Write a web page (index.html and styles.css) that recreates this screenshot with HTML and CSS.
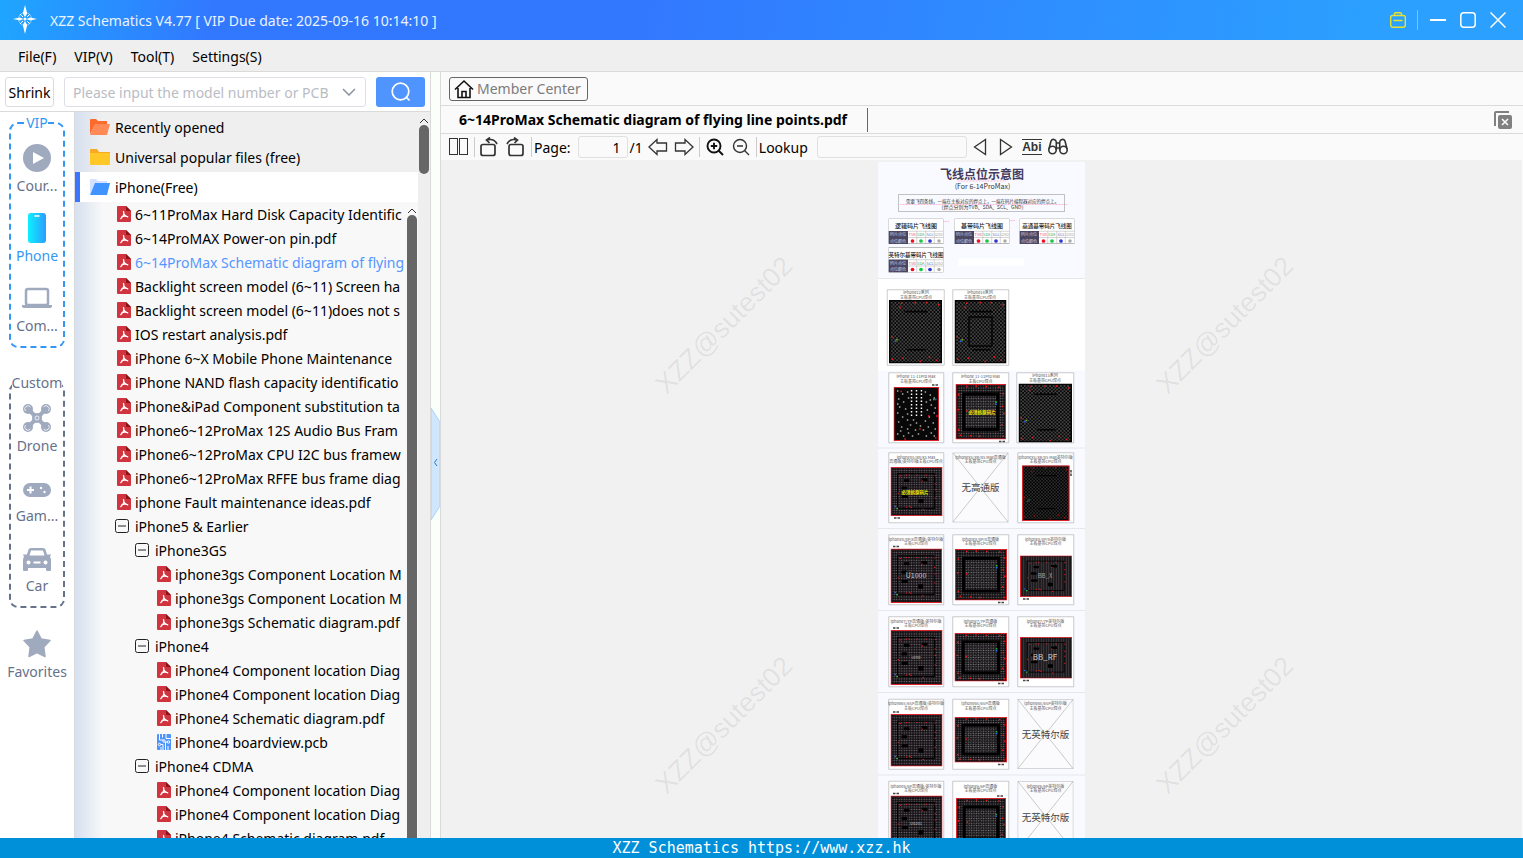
FILE: index.html
```html
<!DOCTYPE html>
<html lang="en">
<head>
  <meta charset="UTF-8">
  <meta name="viewport" content="width=device-width, initial-scale=1.0">
  <title>XZZ Schematics</title>
  <link rel="stylesheet" href="styles.css">
</head>
<body>
  <!-- Shared icons -->
  <svg class="sprite" aria-hidden="true">
    <symbol id="i-pdf" viewBox="0 0 20 16">
      <path d="M3 0h8l5 5v10q0 1-1 1H3q-1 0-1-1V1q0-1 1-1z" fill="#d0353f"/>
      <path d="M11 0l5 5h-4q-1 0-1-1z" fill="#8e1119"/>
      <path d="M8.500 5.500c1 2-.5 5-2.800 7.200M8.500 5.500c0 3 2 4.800 4.300 5.300M6.700 10.800c1.500-.6 3.500-.8 5-.4" fill="none" stroke="#fff" stroke-width="1.200" stroke-linecap="round"/>
    </symbol>
    <symbol id="i-pcb" viewBox="0 0 20 16">
      <rect x="2" width="14" height="16" rx="1" fill="#4f94fb"/>
      <path d="M4.500 0v6h4M7.500 0v3.500M4 10.500h4V16M6 13v3M10.500 16v-8h3M13 16v-4M11 0v4.500h5" fill="none" stroke="#fff"/>
      <circle cx="9" cy="7" r="1.200" fill="#4f94fb" stroke="#fff"/><circle cx="13.500" cy="8" r="1.200" fill="#4f94fb" stroke="#fff"/><circle cx="4.500" cy="10.500" r="1.200" fill="#4f94fb" stroke="#fff"/>
    </symbol>
    <symbol id="i-minus" viewBox="0 0 20 16">
      <rect x=".5" y="1.500" width="13" height="13" rx="2" fill="none" stroke="#222"/>
      <path d="M3 8h8" stroke="#222"/>
    </symbol>
    <symbol id="i-up" viewBox="0 0 10 6"><path d="M1 5l4-4 4 4" fill="none" stroke="#333"/></symbol>
  </svg>

  <header class="titlebar">
    <svg class="logo" width="24" height="30" viewBox="0 0 24 30">
      <circle cx="12" cy="14" r="6.500" fill="none" stroke="#8fd0ff" stroke-width="1"/>
      <path d="M12 0l2.200 8.500L12 12l-2.200-3.500zM12 29l2.200-9L12 16l-2.200 4zM0 14l7-1.600 3.500 1.600L7 15.600zM24 14l-7-1.600-3.500 1.600 3.500 1.600z" fill="#fff"/>
      <path d="M7 9l3 3M17 9l-3 3M7 19l3-3M17 19l-3-3" stroke="#fff"/>
      <circle cx="12" cy="14" r="1.500" fill="#fff"/>
    </svg>
    <h1>XZZ Schematics V4.77 [ VIP Due date: 2025-09-16 10:14:10 ]</h1>
    <button class="win-btn" aria-label="Toolbox"><svg width="16" height="16" viewBox="0 0 16 16" fill="none" stroke="#e6e32f" stroke-width="1.400"><rect x=".7" y="3.500" width="14.600" height="11.800" rx="2"/><path d="M4.500 3.500V2q0-1.300 1.300-1.300h4.400q1.300 0 1.300 1.300v1.500M3.500 8.500h9"/></svg></button>
    <span class="win-sep"></span>
    <button class="win-btn" aria-label="Minimize"><svg width="16" height="16" viewBox="0 0 16 16"><path d="M0 8h16" stroke="#fff" stroke-width="2"/></svg></button>
    <button class="win-btn" aria-label="Maximize"><svg width="16" height="16" viewBox="0 0 16 16"><rect x=".8" y=".8" width="14.400" height="14.400" rx="3" fill="none" stroke="#fff" stroke-width="1.500"/></svg></button>
    <button class="win-btn" aria-label="Close"><svg width="16" height="16" viewBox="0 0 16 16"><path d="M.5.5l15 15M15.500.5l-15 15" stroke="#fff" stroke-width="1.500"/></svg></button>
  </header>

  <nav class="menubar">
    <button>File(F)</button>
    <button>VIP(V)</button>
    <button>Tool(T)</button>
    <button>Settings(S)</button>
  </nav>

  <div class="main">
    <aside class="side">
      <form class="search">
        <button type="button" class="shrink">Shrink</button>
        <div class="search-field">
          <input type="text" aria-label="Model number" placeholder="Please input the model number or PCB">
          <button type="button" aria-label="History"><svg width="14" height="8" viewBox="0 0 14 8"><path d="M1 1l6 6 6-6" fill="none" stroke="#8b93a0" stroke-width="1.500"/></svg></button>
        </div>
        <button type="button" class="search-btn" aria-label="Search"><svg width="20" height="20" viewBox="0 0 20 20" fill="none" stroke="#fff" stroke-width="1.700"><circle cx="9.500" cy="9.500" r="8.300"/><path d="M15.500 15.500l3 3"/></svg></button>
      </form>

      <div class="side-body">
        <div class="cats">
          <fieldset class="cat-group vip">
            <legend>VIP</legend>
            <button><svg width="30" height="30" viewBox="0 0 30 30"><circle cx="15" cy="15" r="14" fill="#a0aabf"/><path d="M11 9v12l11-6z" fill="#fff"/></svg>Cour...</button>
            <button class="active"><svg width="30" height="30" viewBox="0 0 30 30"><defs><linearGradient id="ph"><stop offset="0" stop-color="#0df0ff"/><stop offset="1" stop-color="#2c9dff"/></linearGradient></defs><rect x="6" width="18" height="30" rx="3" fill="url(#ph)"/><path d="M13 3h4" stroke="#fff" stroke-width="1.500" stroke-linecap="round"/></svg>Phone</button>
            <button><svg width="30" height="30" viewBox="0 0 30 30"><rect x="4" y="6" width="22" height="16" rx="2" fill="none" stroke="#a0aabf" stroke-width="2.500"/><path d="M0 22h30v1q0 2-3 2H3q-3 0-3-2z" fill="#a0aabf"/></svg>Com...</button>
          </fieldset>
          <fieldset class="cat-group custom">
            <legend>Custom</legend>
            <button><svg width="30" height="30" viewBox="0 0 30 30" fill="#a0aabf"><circle cx="6" cy="6" r="5"/><circle cx="24" cy="6" r="5"/><circle cx="6" cy="24" r="5"/><circle cx="24" cy="24" r="5"/><path d="M6 6l9 9M24 6l-9 9M6 24l9-9M24 24l-9-9" stroke="#a0aabf" stroke-width="4"/><circle cx="15" cy="15" r="5"/><g fill="none" stroke="#fff" stroke-width=".8"><circle cx="15" cy="15" r="2"/><path d="M3.500 8a3.200 3.200 0 1 1 5-4M26.500 8a3.200 3.200 0 1 0-5-4M3.500 22a3.200 3.200 0 1 0 5 4M26.500 22a3.200 3.200 0 1 1-5 4"/></g></svg>Drone</button>
            <button><svg width="30" height="30" viewBox="0 0 30 30"><rect x="1" y="10" width="28" height="14" rx="7" fill="#a0aabf"/><path d="M5 17h7M8.500 13.500v7" stroke="#fff" stroke-width="2"/><circle cx="19" cy="15" r="1.200" fill="#fff"/><circle cx="22.500" cy="19" r="1.200" fill="#fff"/></svg>Gam...</button>
            <button><svg width="30" height="30" viewBox="0 0 30 30"><path d="M1 11.500h4l1.500-5Q7.200 5 9 5h12q1.800 0 2.500 1.500l1.500 5h4l-1 2.500q1 1 1 3v10q0 1-1 1h-3q-1 0-1-1v-2H6v2q0 1-1 1H2q-1 0-1-1V17q0-2 1-3z" fill="#a0aabf"/><path d="M9 7.500h12l1.500 5h-15z" fill="#fff"/><circle cx="6.500" cy="19.500" r="2" fill="#fff"/><circle cx="23.500" cy="19.500" r="2" fill="#fff"/><path d="M11.500 19.500h7" stroke="#fff" stroke-width="2"/></svg>Car</button>
          </fieldset>
          <button class="favorites"><svg width="30" height="30" viewBox="0 0 30 30"><path d="M15 2l4.200 8 8.800 1.500-6.200 6.500 1.200 9.500-8-4-8 4 1.200-9.500L2 11.500 10.800 10z" fill="#a0aabf" stroke="#a0aabf" stroke-width="1.500" stroke-linejoin="round"/></svg>Favorites</button>
        </div>

        <div class="tree">
          <div class="tree-content">
            <button class="folder"><svg width="20" height="16" viewBox="0 0 20 16"><path d="M0 15V1q0-1 1-1h5l2 2h9v4H5z" fill="#fc6b2c"/><path d="M5 5h15l-3 11H0z" fill="#ff8a57"/></svg>Recently opened</button>
            <button class="folder"><svg width="20" height="16" viewBox="0 0 20 16"><path d="M0 6V1q0-1 1-1h6l2 3h11v3z" fill="#f9aa22"/><path d="M0 4h20v11q0 1-1 1H1q-1 0-1-1z" fill="#ffc727"/></svg>Universal popular files (free)</button>
            <button class="folder open"><svg width="20" height="16" viewBox="0 0 20 16"><path d="M0 15V1q0-1 1-1h5l2 2h9v4H5z" fill="#d5e1ff"/><path d="M5 4h15l-3 12H0z" fill="#3f94ff"/></svg>iPhone(Free)</button>
            <div class="files-wrap">
              <ul class="files">
                <li><svg><use href="#i-pdf"/></svg>6~11ProMax Hard Disk Capacity Identific</li>
                <li><svg><use href="#i-pdf"/></svg>6~14ProMAX Power-on pin.pdf</li>
                <li class="current"><svg><use href="#i-pdf"/></svg>6~14ProMax Schematic diagram of flying</li>
                <li><svg><use href="#i-pdf"/></svg>Backlight screen model (6~11) Screen ha</li>
                <li><svg><use href="#i-pdf"/></svg>Backlight screen model (6~11)does not s</li>
                <li><svg><use href="#i-pdf"/></svg>IOS restart analysis.pdf</li>
                <li><svg><use href="#i-pdf"/></svg>iPhone 6~X Mobile Phone Maintenance</li>
                <li><svg><use href="#i-pdf"/></svg>iPhone NAND flash capacity identificatio</li>
                <li><svg><use href="#i-pdf"/></svg>iPhone&amp;iPad Component substitution ta</li>
                <li><svg><use href="#i-pdf"/></svg>iPhone6~12ProMax 12S Audio Bus Fram</li>
                <li><svg><use href="#i-pdf"/></svg>iPhone6~12ProMax CPU I2C bus framew</li>
                <li><svg><use href="#i-pdf"/></svg>iPhone6~12ProMax RFFE bus frame diag</li>
                <li><svg><use href="#i-pdf"/></svg>iphone Fault maintenance ideas.pdf</li>
                <li><svg><use href="#i-minus"/></svg>iPhone5 &amp; Earlier</li>
                <li class="lv2"><svg><use href="#i-minus"/></svg>iPhone3GS</li>
                <li class="lv3"><svg><use href="#i-pdf"/></svg>iphone3gs Component Location M</li>
                <li class="lv3"><svg><use href="#i-pdf"/></svg>iphone3gs Component Location M</li>
                <li class="lv3"><svg><use href="#i-pdf"/></svg>iphone3gs Schematic diagram.pdf</li>
                <li class="lv2"><svg><use href="#i-minus"/></svg>iPhone4</li>
                <li class="lv3"><svg><use href="#i-pdf"/></svg>iPhone4 Component location Diag</li>
                <li class="lv3"><svg><use href="#i-pdf"/></svg>iPhone4 Component location Diag</li>
                <li class="lv3"><svg><use href="#i-pdf"/></svg>iPhone4 Schematic diagram.pdf</li>
                <li class="lv3"><svg><use href="#i-pcb"/></svg>iPhone4 boardview.pcb</li>
                <li class="lv2"><svg><use href="#i-minus"/></svg>iPhone4 CDMA</li>
                <li class="lv3"><svg><use href="#i-pdf"/></svg>iPhone4 Component location Diag</li>
                <li class="lv3"><svg><use href="#i-pdf"/></svg>iPhone4 Component location Diag</li>
                <li class="lv3"><svg><use href="#i-pdf"/></svg>iPhone4 Schematic diagram.pdf</li>
              </ul>
              <div class="scroll inner"><svg width="10" height="6"><use href="#i-up"/></svg><span class="thumb"></span></div>
            </div>
          </div>
          <div class="scroll outer"><svg width="10" height="6"><use href="#i-up"/></svg><span class="thumb"></span></div>
        </div>
      </div>
    </aside>

    <div class="splitter">
      <button aria-label="Collapse"><svg width="9" height="112" viewBox="0 0 9 112"><path d="M0 0l9 14v84L0 112z" fill="#cfe6fd" stroke="#a9d2fb"/><path d="M6 51L3.500 54.500 6 58" fill="none" stroke="#2b78c8"/></svg></button>
    </div>

    <section class="viewer">
      <div class="member-row">
        <button class="member"><svg width="20" height="20" viewBox="0 0 20 20" fill="none" stroke="#111" stroke-width="1.600"><path d="M1 10.500L10 2l9 8.500M4 9v9.500h12V9M8 18v-5.500h4V18"/></svg>Member Center</button>
      </div>
      <div class="tabs">
        <button class="tab">6~14ProMax Schematic diagram of flying line points.pdf</button>
        <button class="close-all" aria-label="Close all"><svg width="18" height="18" viewBox="0 0 18 18"><path d="M1 15V2q0-1 1-1h13" fill="none" stroke="#808080" stroke-width="2"/><rect x="4" y="4" width="14" height="14" rx="2" fill="#808080"/><path d="M8 8l6 6M14 8l-6 6" stroke="#fff" stroke-width="1.500"/></svg></button>
      </div>
      <div class="toolbar">
        <button aria-label="Two pages"><svg width="20" height="18" viewBox="0 0 20 18" fill="none" stroke="#333"><rect x=".5" y=".5" width="8" height="16"/><rect x="10.500" y=".5" width="8" height="16"/></svg></button>
        <span class="sep"></span>
        <button aria-label="Rotate left"><svg width="20" height="20" viewBox="0 0 20 20" fill="none" stroke="#333" stroke-width="1.700"><rect x="1" y="7.500" width="14" height="11" rx="2"/><path d="M7 3q7-2 10 4M10 .5L6.500 3l3 3"/></svg></button>
        <button aria-label="Rotate right"><svg width="20" height="20" viewBox="0 0 20 20" fill="none" stroke="#333" stroke-width="1.700"><rect x="3" y="7.500" width="14" height="11" rx="2"/><path d="M11 3Q4 1 1 7M8 .5L11.500 3l-3 3"/></svg></button>
        <span class="sep"></span>
        <label for="page">Page:</label>
        <input id="page" class="page-no" type="text" value="1">
        <span class="page-total">/1</span>
        <button aria-label="Previous page"><svg width="20" height="18" viewBox="0 0 20 18" fill="none" stroke="#333" stroke-width="1.300"><path d="M1 9l8-7.500V5h9.500v8H9v3.500z"/></svg></button>
        <button aria-label="Next page"><svg width="20" height="18" viewBox="0 0 20 18" fill="none" stroke="#333" stroke-width="1.300"><path d="M19 9l-8-7.500V5H1.500v8H11v3.500z"/></svg></button>
        <span class="sep"></span>
        <button aria-label="Zoom in"><svg width="18" height="18" viewBox="0 0 18 18" fill="none" stroke="#111" stroke-width="1.900"><circle cx="8" cy="8" r="6.500"/><path d="M12.500 12.500l4.500 4.500M8 4.800v6.400M4.800 8h6.400"/></svg></button>
        <button aria-label="Zoom out"><svg width="18" height="18" viewBox="0 0 18 18" fill="none" stroke="#333" stroke-width="1.400"><circle cx="8" cy="8" r="6.500"/><path d="M12.500 12.500l4.500 4.500M5 8h6"/></svg></button>
        <span class="sep"></span>
        <label for="lookup">Lookup</label>
        <input id="lookup" class="lookup" type="text">
        <button aria-label="Find previous"><svg width="14" height="18" viewBox="0 0 14 18" fill="none" stroke="#333" stroke-width="1.300"><path d="M12.500 1.500v15L1.500 9z"/></svg></button>
        <button aria-label="Find next"><svg width="14" height="18" viewBox="0 0 14 18" fill="none" stroke="#333" stroke-width="1.300"><path d="M1.500 1.500v15l11-7.500z"/></svg></button>
        <button><span class="abi">Abi</span></button>
        <button aria-label="Find"><svg width="20" height="18" viewBox="0 0 20 18" fill="none" stroke="#333" stroke-width="1.600"><circle cx="4.500" cy="12" r="3.700"/><circle cx="15.500" cy="12" r="3.700"/><path d="M1 11L3 3q1-2 3-1.500T8.300 4v8M19 11l-2-8q-1-2-3-1.500T11.700 4v8M8.300 5h3.400M8.300 10h3.400"/></svg></button>
      </div>

      <div class="canvas">
        <svg class="sheet" viewBox="0 0 414 1400">
          <defs>
            <pattern id="dots" width="7" height="7" patternUnits="userSpaceOnUse"><path d="M.8 1.800h2M4.300 5.300h2" stroke="#dedede" stroke-width="2"/></pattern>
            <pattern id="dense" width="5" height="5" patternUnits="userSpaceOnUse"><path d="M1.200 2.500h2.600" stroke="#787378" stroke-width="2.400"/></pattern>
            <symbol id="t-head" viewBox="0 0 110 51">
              <rect x=".5" y=".5" width="109" height="50" fill="#fff" stroke="#777"/>
              <rect y="25" width="39" height="26" fill="#4a4560"/>
              <path d="M39 25.500h71M39 38h71M56.500 25v26M74.500 25v26M91.500 25v26" stroke="#aaa" fill="none"/>
              <g font-size="8"><text x="3" y="35" fill="#d5d2e0">码片点位</text><text x="3" y="48" fill="#d5d2e0">点位颜色</text>
              <text x="40" y="35" fill="#e75a76">TVB</text><text x="57" y="35" fill="#4da862">SDA</text><text x="76" y="35" fill="#6267b5">SCL</text><text x="92" y="35" fill="#aaa">GND</text></g>
              <circle cx="48" cy="45" r="3.700" fill="#f01024"/><circle cx="65" cy="45" r="3.700" fill="#18c840"/><circle cx="83" cy="45" r="3.700" fill="#3038cf"/><circle cx="101" cy="45" r="3.500" fill="#aaa"/>
            </symbol>
            <!-- open ball grid -->
            <symbol id="chip-open" viewBox="0 0 104 120" preserveAspectRatio="none">
              <rect width="104" height="120" fill="#050505"/><rect x="3" y="3" width="98" height="114" fill="url(#dots)"/>
              <path d="M30 22h45M36 94h36" stroke="#050505" stroke-width="3"/>
              <path d="M23 6h3M50 5h3M72 5h3M96 9h3M20 14h3M4 70h3M5 112h3M78 108h3M60 116h3M92 114h3M26 110h3" stroke="#f01818" stroke-width="3"/>
              <path d="M11 78h3" stroke="#2868ff" stroke-width="3"/><path d="M14 75h3" stroke="#70b818" stroke-width="3"/>
            </symbol>
            <!-- ball grid with a black ring -->
            <symbol id="chip-ring" viewBox="0 0 104 104" preserveAspectRatio="none">
              <rect x="1" y="1" width="102" height="102" fill="#0b0a0b" stroke="#d8222c" stroke-width="2"/>
              <rect x="3" y="3" width="98" height="98" fill="url(#dense)"/>
              <rect x="17" y="19" width="70" height="66" fill="none" stroke="#000" stroke-width="6"/>
              <rect x="22" y="24" width="60" height="56" fill="url(#dots)" opacity=".35"/>
              <path d="M5 20h3M4 48h3M5 86h3M9 96h3M22 5h3M41 4h3M62 5h3M88 6h3M97 18h3M95 42h3M98 55h3M94 76h3M97 98h3M48 98h3M30 97h3M22 50h3" stroke="#f01818" stroke-width="3"/>
              <path d="M82 38h3" stroke="#2868ff" stroke-width="3"/><path d="M82 34h3" stroke="#18c840" stroke-width="3"/>
            </symbol>
            <!-- dense processor grid -->
            <symbol id="chip-cpu" viewBox="0 0 104 104" preserveAspectRatio="none">
              <rect x="1" y="1" width="102" height="102" fill="#0f0c0f" stroke="#d8222c" stroke-width="2"/>
              <rect x="3" y="3" width="98" height="98" fill="url(#dense)"/>
              <rect x="14" y="14" width="74" height="74" fill="none" stroke="#000" stroke-width="2"/>
              <path d="M27 26h11v6H27zM62 24h12v6H62zM22 42h11v6H22zM22 60h13v6H22zM56 68h10v9H56z" fill="#000"/>
              <path d="M18 19h3M30 17h3M36 17h3M52 17h3M70 17h3M88 18h3M88 36h3M88 48h3M88 66h3M31 85h3M37 84h3M40 86h3M14 56h3M62 30h3M64 90h3" stroke="#d81822" stroke-width="2"/>
              <path d="M8 84h3" stroke="#2868ff" stroke-width="3"/><path d="M12 88h3" stroke="#18c840" stroke-width="3"/>
            </symbol>
            <!-- flash with scattered pads -->
            <symbol id="chip-flash" viewBox="0 0 92 108" preserveAspectRatio="none">
              <rect x="1" y="1" width="90" height="106" fill="#080808" stroke="#d8222c" stroke-width="2"/>
              <path d="M7 8h3M17 14h3M27 10h3M9 24h3M19 30h3M11 40h3M23 44h3M7 52h3M17 60h3M27 66h3M9 70h3M15 80h3M27 84h3M7 94h3M19 98h3M33 76h3M29 92h3M63 10h3M73 16h3M81 22h3M65 30h3M75 36h3M67 46h3M81 52h3M71 60h3M63 68h3M79 72h3M69 80h3M59 86h3M75 92h3M65 98h3M81 98h3M45 72h3M53 78h3M43 86h3M49 94h3M29 22h3M7 34h3M27 54h3M13 88h3M37 98h3M39 66h3M83 84h3M73 26h3M83 42h3" stroke="#fff" stroke-width="2"/>
              <path d="M36.500 6v54M46.500 6v54M56.500 6v54" stroke="#fff" stroke-width="3" stroke-dasharray="3 4"/>
              <path d="M14 9h3M86 58h3M70 58h3M22 104h3M52 84h3M84 102h3" stroke="#f01818" stroke-width="3"/>
              <path d="M80 25h3" stroke="#18c840" stroke-width="3"/><path d="M84 25h3" stroke="#2868ff" stroke-width="3"/>
            </symbol>
            <symbol id="void" viewBox="0 0 112 140"><path d="M.5.500h111v139H.5zL111.500 139.500M111.500.5L.5 139.500" fill="#fbfbfd" stroke="#999"/></symbol>
          </defs>

          <rect width="414" height="1400" fill="#f9faff"/>
          <rect y="234" width="414" height="183" fill="#fff"/>
          <path d="M0 233h414M0 572h414M0 733h414M0 897h414M0 1061h414M0 1226h414" stroke="#c8c8cc" stroke-dasharray="3 1"/>

          <!-- heading -->
          <g text-anchor="middle" fill="#333">
            <text x="208" y="33" font-size="24" font-weight="700" fill="#443a5c">飞线点位示意图</text>
            <text x="209" y="54" font-size="14">(For 6-14ProMax)</text>
            <rect x="40.500" y="65.500" width="333" height="33" fill="none" stroke="#888"/>
            <text x="209" y="82" font-size="9">需要飞四条线，一端在主板对应的焊点上，一端在码片编程器对应的焊点上。</text>
            <text x="209" y="94" font-size="10">（焊点分别为TVB、SDA、SCL、GND）</text>
          </g>
          <path d="M160 38h96M44 85h336M38 119h104M158 117h116M288 117h80M22 174h76" stroke="#ff7cb4" stroke-dasharray="3 1 1 1" stroke-width="1.500" opacity=".7"/>
          <use href="#t-head" x="21" y="113" width="110" height="51"/>
          <use href="#t-head" x="153" y="113" width="110" height="51"/>
          <use href="#t-head" x="283" y="113" width="110" height="51"/>
          <use href="#t-head" x="21" y="170" width="110" height="51"/>
          <rect x="161" y="193" width="131" height="15" fill="#fff"/>
          <g text-anchor="middle" font-weight="500" fill="#222">
            <text x="76" y="132" font-size="12">逻辑码片飞线图</text>
            <text x="208" y="132" font-size="12">基带码片飞线图</text>
            <text x="338" y="132" font-size="11">高通基带码片飞线图</text>
            <text x="76" y="189" font-size="11">英特尔基带码片飞线图</text>
          </g>

          <!-- frames -->
          <g fill="#fff" stroke="#999">
            <path d="M18.500 255.500h114v151h-114zM149.500 255.500h112v151h-112z"/>
            <path d="M21.500 421.500h110v140h-110zM149.500 421.500h112v140h-112zM277.500 421.500h114v140h-114z"/>
            <path d="M21.500 581.500h110v140h-110zM279.500 581.500h112v140h-112z"/>
            <path d="M21.500 745.500h110v140h-110zM149.500 745.500h112v140h-112zM279.500 745.500h112v140h-112z"/>
            <path d="M21.500 909.500h110v140h-110zM149.500 909.500h112v140h-112zM279.500 909.500h112v140h-112z"/>
            <path d="M21.500 1074.500h110v140h-110zM149.500 1074.500h112v140h-112z"/>
            <path d="M21.500 1238.500h110v140h-110zM149.500 1238.500h112v140h-112z"/>
          </g>
          <use href="#void" x="149" y="581" width="112" height="140"/>
          <use href="#void" x="279" y="1074" width="112" height="140"/>
          <use href="#void" x="279" y="1238" width="112" height="140"/>

          <!-- chips -->
          <use href="#chip-open" x="22" y="276" width="106" height="127"/>
          <use href="#chip-open" x="153" y="276" width="104" height="127"/>
          <path d="M182 310h46v58h-46z" fill="none" stroke="#050505" stroke-width="3"/>
          <use href="#chip-flash" x="31" y="450" width="91" height="108"/>
          <use href="#chip-ring" x="155" y="444" width="101" height="111"/>
          <use href="#chip-open" x="281" y="443" width="107" height="118"/>
          <use href="#chip-cpu" x="25" y="610" width="104" height="98"/>
          <use href="#chip-open" x="288" y="607" width="95" height="110"/>
          <rect x="289" y="608" width="93" height="109" fill="#000" fill-opacity=".35" stroke="#d8222c" stroke-width="2"/>
          <use href="#chip-cpu" x="25" y="773" width="103" height="109"/>
          <use href="#chip-ring" x="154" y="774" width="104" height="103"/>
          <use href="#chip-cpu" x="284" y="787" width="104" height="83"/>
          <use href="#chip-cpu" x="25" y="936" width="104" height="110"/>
          <use href="#chip-ring" x="153" y="942" width="105" height="97"/>
          <use href="#chip-cpu" x="284" y="950" width="104" height="83"/>
          <use href="#chip-cpu" x="25" y="1104" width="104" height="105"/>
          <use href="#chip-ring" x="153" y="1110" width="105" height="91"/>
          <use href="#chip-cpu" x="25" y="1267" width="104" height="106"/>
          <use href="#chip-ring" x="156" y="1272" width="100" height="100"/>
          <path d="M108 446h14M254 559h-14M32 712h14M30 769h14M252 881h-14M290 874h14M30 932h14M252 1043h-14M290 1037h14M30 1100h14M252 1205h-14M30 1263h14M250 1268h-14M386 616v14" stroke="#444" stroke-width="3" stroke-dasharray="5 2"/>

          <!-- captions -->
          <g text-anchor="middle" font-size="8" fill="#555">
            <text x="76" y="263">iPhone12系列</text><text x="76" y="273">主板基带CPU焊点</text>
            <text x="204" y="263">iPhone14系列</text><text x="204" y="273">主板基带CPU焊点</text>
            <text x="76" y="432">iPhone 11-11Pro Max</text><text x="76" y="441">主板基带CPU焊点</text>
            <text x="205" y="432">iPhone 11-11Pro Max</text><text x="205" y="441">主板CPU焊点</text>
            <text x="334" y="430">iPhone13系列</text><text x="334" y="440">主板基带CPU焊点</text>
            <text x="76" y="593">iphoneXS/XR/XS Max</text><text x="76" y="602">高通版/英特尔版主板CPU焊点</text>
            <text x="205" y="593">iphoneXS/XR/XS Max高通版</text><text x="205" y="602">主板基带CPU焊点</text>
            <text x="335" y="593">iphoneXS/XR/XS Max英特尔版</text><text x="335" y="602">主板基带CPU焊点</text>
            <text x="76" y="757">iphone8/8P/X高通版/英特尔版</text><text x="76" y="766">主板CPU焊点</text>
            <text x="205" y="757">iphone8/8P/X高通版</text><text x="205" y="766">主板基带CPU焊点</text>
            <text x="335" y="757">iphone8/8P/X英特尔版</text><text x="335" y="766">主板基带CPU焊点</text>
            <text x="76" y="921">iphone7/7P高通版/英特尔版</text><text x="76" y="930">主板CPU焊点</text>
            <text x="205" y="921">iphone7/7P高通版</text><text x="205" y="930">主板基带CPU焊点</text>
            <text x="335" y="921">iphone7/7P英特尔版</text><text x="335" y="930">主板基带CPU焊点</text>
            <text x="76" y="1086">iphone6S/6SP高通版/英特尔版</text><text x="76" y="1095">主板CPU焊点</text>
            <text x="205" y="1086">iphone6S/6SP高通版</text><text x="205" y="1095">主板基带CPU焊点</text>
            <text x="335" y="1086">iphone6S/6SP英特尔版</text><text x="335" y="1095">主板基带CPU焊点</text>
            <text x="76" y="1251">iphone6/6P高通版/英特尔版</text><text x="76" y="1260">主板CPU焊点</text>
            <text x="205" y="1251">iphone6/6P高通版</text><text x="205" y="1260">主板基带CPU焊点</text>
            <text x="335" y="1251">iphone6/6P英特尔版</text><text x="335" y="1260">主板基带CPU焊点</text>
          </g>
          <g text-anchor="middle" font-size="19" fill="#444">
            <text x="205" y="658">无高通版</text>
            <text x="335" y="1152">无英特尔版</text>
            <text x="335" y="1317">无英特尔版</text>
          </g>
          <g text-anchor="middle" font-size="9" font-weight="700" fill="#f4ec00">
            <text x="208" y="504">必须拆原码片</text>
            <text x="74" y="664">必须拆原码片</text>
          </g>
          <g text-anchor="middle" fill="#ccc">
            <text x="76" y="832" font-size="14">U1000</text>
            <text x="334" y="832" font-size="12" opacity=".7">BB_X</text>
            <text x="334" y="996" font-size="16">BB_RF</text>
            <text x="76" y="994" font-size="6">U0700</text>
            <text x="76" y="1325" font-size="8">U0201</text>
          </g>
        </svg>
        <div class="watermarks" aria-hidden="true">
          <span>XZZ@sutest02</span><span>XZZ@sutest02</span>
          <span>XZZ@sutest02</span><span>XZZ@sutest02</span>
        </div>
      </div>
    </section>
  </div>

  <footer class="footer">XZZ Schematics https://www.xzz.hk</footer>
</body>
</html>
```

FILE: styles.css
```css
* {
  box-sizing: border-box;
}
body {
  margin: 0;
  height: 100vh;
  display: flex;
  flex-direction: column;
  overflow: hidden;
  font-family: "Noto Sans", "Noto Sans CJK SC", sans-serif;
  font-size: 14px;
  color: #000;
  background: #fff;
}
button, input {
  font: inherit;
  color: inherit;
}
button {
  padding: 0;
  border: none;
  background: none;
  white-space: nowrap;
  cursor: pointer;
}
.sprite {
  display: none;
}

/* Title bar */
.titlebar {
  flex: none;
  height: 40px;
  display: flex;
  align-items: center;
  padding: 0 10px 0 13px;
  color: #eaf3ff;
  background: linear-gradient(100deg, #1fa6ff 0, #3278ff 14%, #3278ff 42%, #2ba0ff 90%);
}
.titlebar h1 {
  flex: 1;
  margin: 0 0 0 13px;
  font-size: 14px;
  font-weight: 400;
}
.win-btn {
  width: 30px;
  height: 30px;
  display: flex;
  align-items: center;
  justify-content: center;
}
.win-sep {
  width: 1px;
  height: 20px;
  margin: 0 5px 0 4px;
  background: #7fc0ff;
}

/* Menu */
.menubar {
  flex: none;
  height: 32px;
  display: flex;
  gap: 18px;
  padding: 2px 18px 0;
  background: #efefef;
  border-bottom: 1px solid #dadada;
}

.main {
  flex: 1;
  min-height: 0;
  display: flex;
}

/* Left side */
.side {
  flex: none;
  width: 431px;
  display: flex;
  flex-direction: column;
  border-right: 1px solid #dadada;
}
.search {
  flex: none;
  height: 40px;
  display: flex;
  gap: 10px;
  padding: 5px 5px 4px;
  border-bottom: 1px solid #dadada;
}
.shrink {
  width: 49px;
  border: 1px solid #dcdcdc;
  border-radius: 3px;
}
.search-field {
  flex: 1;
  display: flex;
  align-items: center;
  padding: 0 9px 0 8px;
  border: 1px solid #dcdfe6;
  border-radius: 3px;
}
.search-field input {
  flex: 1;
  min-width: 0;
  padding: 0;
  border: none;
  outline: none;
  background: none;
}
.search-field input::placeholder {
  color: #b9bcc4;
}
.search-field svg {
  display: block;
}
.search-btn {
  width: 49px;
  display: flex;
  align-items: center;
  justify-content: center;
  background: #4f94ff;
  border-radius: 3px;
}
.side-body {
  flex: 1;
  min-height: 0;
  display: flex;
}

/* Categories */
.cats {
  flex: none;
  width: 75px;
  padding: 0 0 0 9px;
  color: #66718a;
  border-right: 1px solid #dadada;
}
.cat-group {
  width: 56px;
  min-width: 0;
  margin: 0 0 24px;
  padding: 0 0 2px;
  border: 2px dashed #3597f5;
  border-radius: 9px;
}
.cat-group legend {
  margin: 0 auto;
  padding: 0;
  line-height: 22px;
  color: #3597f5;
}
.cat-group.custom, .cat-group.custom legend {
  border-color: #66718a;
  color: #66718a;
}
.cat-group.custom {
  margin-bottom: 18px;
}
.cats button {
  width: 100%;
  height: 70px;
  display: flex;
  flex-direction: column;
  align-items: center;
  gap: 2px;
  padding-top: 9px;
  line-height: 22px;
}
.cats .favorites {
  width: 56px;
  padding-top: 3px;
}
.cats .active {
  color: #3597f5;
}

/* Tree */
.tree {
  flex: 1;
  min-width: 0;
  display: flex;
  background: #f8f8f8;
}
.tree-content {
  flex: 1;
  min-width: 0;
  display: flex;
  flex-direction: column;
  background: linear-gradient(to right, #d6e0f0, #f8f8f8 28px);
}
.folder {
  flex: none;
  height: 30px;
  display: flex;
  align-items: center;
  gap: 5px;
  padding-left: 15px;
  background: linear-gradient(to right, #d6e0f0, #efefef 28px);
}
.folder.open {
  padding-left: 10px;
  background: #fff;
  border-left: 5px solid #3a74ff;
}
.files-wrap {
  flex: 1;
  min-height: 0;
  display: flex;
}
.files {
  flex: 1;
  min-width: 0;
  margin: 0;
  padding: 0 0 0 40px;
  list-style: none;
  overflow: hidden;
}
.files li {
  display: flex;
  align-items: center;
  height: 24px;
  white-space: nowrap;
}
.files svg {
  flex: none;
  width: 20px;
  height: 16px;
}
.files .lv2 {
  padding-left: 20px;
}
.files .lv3 {
  padding-left: 40px;
}
.files .current {
  color: #5596ff;
}

.scroll {
  flex: none;
  width: 12px;
  display: flex;
  flex-direction: column;
  align-items: center;
  gap: 1px;
  padding-top: 6px;
}
.scroll .thumb {
  width: 10px;
  border-radius: 5px;
  background: #666;
}
.outer {
  background: #efefef;
}
.outer .thumb {
  height: 49px;
}
.inner .thumb {
  flex: 1;
  border-radius: 5px 5px 0 0;
}

.splitter {
  flex: none;
  width: 10px;
  display: flex;
  align-items: center;
  background: #fafffa;
  border-right: 1px solid #dadada;
}
.splitter svg {
  display: block;
  margin-top: 18px;
}

/* Viewer */
.viewer {
  flex: 1;
  min-width: 0;
  display: flex;
  flex-direction: column;
  background: #fafafa;
}
.member-row {
  flex: none;
  height: 34px;
  padding: 5px 8px;
  border-bottom: 1px solid #dadada;
}
.member {
  height: 24px;
  display: flex;
  align-items: center;
  gap: 3px;
  padding: 0 6px 1px 4px;
  color: #7c7c7c;
  border: 1px solid #666;
  border-radius: 3px;
}
.tabs {
  flex: none;
  height: 28px;
  display: flex;
  align-items: center;
  justify-content: space-between;
  padding: 0 11px 0 18px;
  border-bottom: 1px solid #dadada;
}
.tab {
  height: 24px;
  padding-right: 20px;
  font-weight: 700;
  border-right: 1px solid #666;
}
.close-all svg {
  display: block;
}
.toolbar {
  flex: none;
  height: 26px;
  display: flex;
  align-items: center;
  padding-left: 5px;
}
.toolbar button {
  width: 26px;
  height: 26px;
  display: flex;
  align-items: center;
  justify-content: center;
}
.toolbar .sep {
  width: 1px;
  height: 20px;
  margin: 0 2px;
  background: #ccc;
}
.toolbar input {
  height: 22px;
  padding: 0 6px;
  border: 1px solid #e0e0e0;
  border-radius: 3px;
  background: #fafafa;
}
.toolbar .page-no {
  width: 50px;
  margin: 0 2px 0 7px;
  text-align: right;
}
.toolbar .page-total {
  margin-right: 2px;
}
.toolbar .lookup {
  width: 150px;
  margin-left: 9px;
}
.abi {
  font: bold 12px/14px "Liberation Sans", sans-serif;
  color: #333;
  border-top: 1px solid #333;
  border-bottom: 1px solid #333;
}

.canvas {
  flex: 1;
  min-height: 0;
  position: relative;
  overflow: hidden;
  padding-top: 2px;
  background: #f1f1f1;
  border-right: 1px solid #fafafa;
}
.sheet {
  display: block;
  width: 207px;
  height: 700px;
  margin: 0 auto;
  font-family: "Noto Sans CJK SC", sans-serif;
}
.watermarks {
  position: absolute;
  top: -35px;
  left: 33px;
  display: grid;
  grid-template-columns: repeat(2, 501px);
  grid-auto-rows: 400px;
  place-items: center;
  font-family: "Liberation Sans", sans-serif;
  font-size: 27px;
  color: rgba(0, 0, 0, 0.08);
  pointer-events: none;
}
.watermarks span {
  transform: rotate(-45deg);
}

.footer {
  flex: none;
  height: 20px;
  line-height: 20px;
  text-align: center;
  font-family: "DejaVu Sans Mono", monospace;
  font-size: 15px;
  color: #fff;
  background: #0090da;
}
```
